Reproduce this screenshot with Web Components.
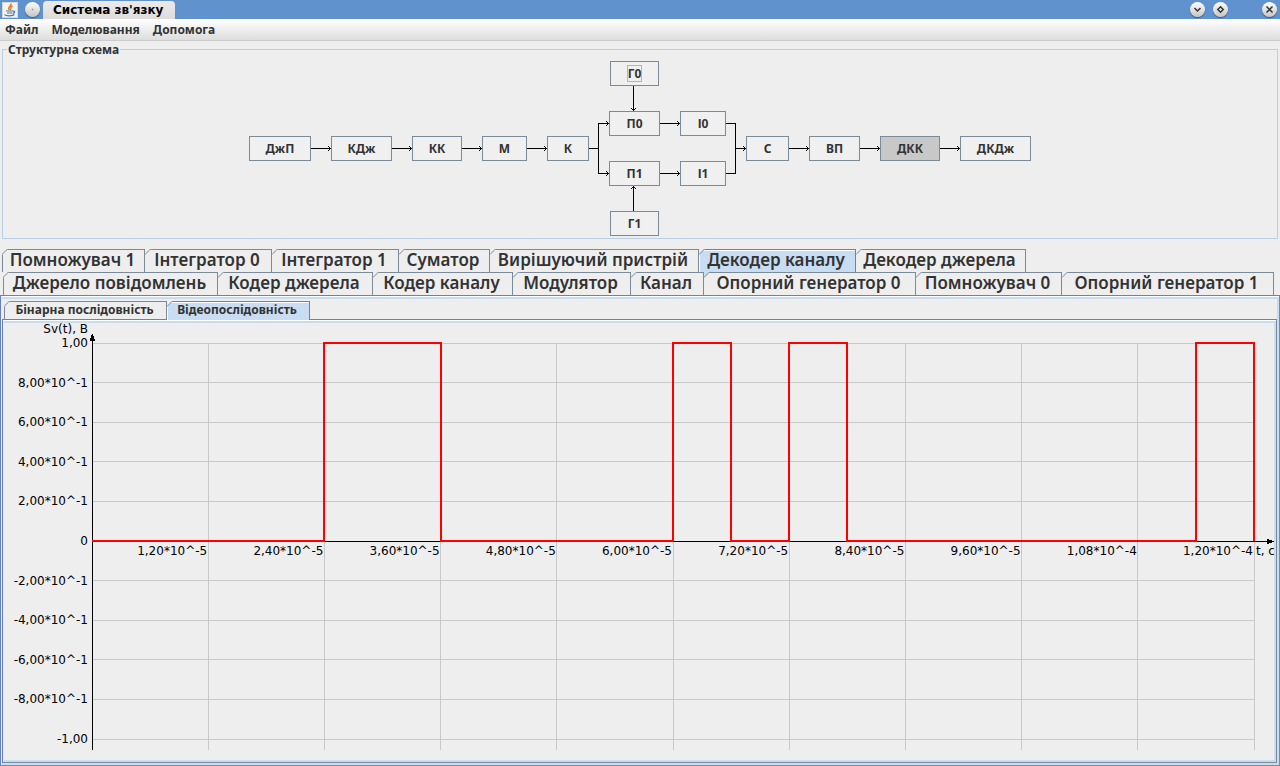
<!DOCTYPE html>
<html lang="uk">
<head>
<meta charset="utf-8">
<title>Система зв'язку</title>
<style>
  body { margin: 0; background: #eeeeee; }
</style>
</head>
<body>
<app-window></app-window>

<script>
const define = (name, html, setup) => {
  const template = document.createElement('template');
  template.innerHTML = html;
  customElements.define(name, class extends HTMLElement {
    connectedCallback() {
      if (this.shadowRoot) return;
      const root = this.attachShadow({ mode: 'open' });
      root.append(template.content.cloneNode(true));
      if (setup) setup(this, root);
    }
  });
};

/* Round window-manager button; the glyph attribute picks its drawing */
define('round-button', `
<style>
  :host { display: block; width: 15px; height: 15px; }
  button { display: block; width: 15px; height: 15px; padding: 0; border: 0; border-radius: 50%;
    background: linear-gradient(#ffffff, #c6c4c2); box-shadow: 0 1px 1px #33558a; }
  svg { display: block; }
</style>
<button type="button"><svg width="15" height="15" viewBox="0 0 15 15" fill="none" stroke="#333333" stroke-width="1.5" aria-hidden="true"><path/></svg></button>`,
(host, root) => {
  const glyphs = {
    shade: 'M4.5 6 L7.5 9 L10.5 6',
    restore: 'M7.5 4.8 L10.2 7.5 L7.5 10.2 L4.8 7.5 Z',
    close: 'M4.5 4.5 L10.5 10.5 M10.5 4.5 L4.5 10.5',
    dot: 'M6.8 7.5 H8.2'
  };
  const p = root.querySelector('path');
  p.setAttribute('d', glyphs[host.getAttribute('glyph')]);
  if (host.getAttribute('glyph') === 'dot') p.setAttribute('stroke', '#888888');
  root.querySelector('button').setAttribute('aria-label', host.getAttribute('label'));
});

define('title-bar', `
<style>
  :host { display: flex; align-items: center; height: 19px; padding: 0 3px 0 2px; background: #6093ce; }
  .java { display: block; width: 16px; height: 16px; margin-right: 7px; }
  h1 { align-self: flex-end; box-sizing: border-box; height: 18px; margin: 0 0 0 3px; padding: 0 12px 0 10px;
    border-radius: 4px 4px 0 0; background: linear-gradient(#eceaea, #dedcdb);
    font: bold 12px/19px "DejaVu Sans", sans-serif; color: #000000; white-space: nowrap; }
  .buttons { display: flex; gap: 8px; margin-left: auto; }
  .buttons :last-child { margin-left: 26px; }
</style>
<svg class="java" viewBox="0 0 16 16" aria-hidden="true">
  <rect x="0.5" y="0.5" width="15" height="15" fill="#f3f3f1" stroke="#d5d5d2"/>
  <path d="M9 1.5 C10 3.5 5.5 4.2 7 8 M10.5 3.8 C7.5 5.2 9.8 6.2 8.2 8" fill="none" stroke="#e8762c" stroke-width="1.5"/>
  <path d="M4 9 H11 M5 11 H10.5 M11 9.2 C13.5 8.6 13 11 11 11.4" fill="none" stroke="#4f7896" stroke-width="1.2"/>
  <path d="M2.5 12.6 C4 14.2 10.5 14.2 12.5 12.6" fill="none" stroke="#4f7896" stroke-width="1.3"/>
</svg>
<round-button glyph="dot" label="Меню вікна"></round-button>
<h1>Система зв'язку</h1>
<div class="buttons">
  <round-button glyph="shade" label="Згорнути"></round-button>
  <round-button glyph="restore" label="Відновити"></round-button>
  <round-button glyph="close" label="Закрити"></round-button>
</div>`);

define('menu-bar', `
<style>
  :host { display: block; border-bottom: 1px solid #cccccc; background: linear-gradient(#ffffff, #dddddd); }
  nav { display: flex; gap: 13px; height: 21px; padding: 0 5px; }
  button { padding: 0; border: 0; background: none; font: bold 12px/21px "Noto Sans", sans-serif; color: #333333; }
</style>
<nav aria-label="Головне меню">
  <button type="button">Файл</button>
  <button type="button">Моделювання</button>
  <button type="button">Допомога</button>
</nav>`);

/* One block of the structural scheme */
define('scheme-node', `
<style>
  :host { position: absolute; display: block; height: 25px; }
  button { display: flex; align-items: center; justify-content: center; width: 100%; height: 100%; padding: 0;
    border: 1px solid #7a8a99; background: #f0f0f0; font: bold 12px/15px "Noto Sans", sans-serif; color: #333333; }
  :host([active]) button { background: #c8c8c8; }
  :host([focused]) span { outline: 1px solid #a3b8cc; }
</style>
<button type="button"><span><slot></slot></span></button>`);

define('block-scheme', `
<style>
  :host { display: block; margin: 1px 2px 0; }
  fieldset { min-width: 0; margin: 0; padding: 4px 0 2px; border: 1px solid #b8cfe5; }
  legend { margin-left: 4px; padding: 0 1px; font: bold 12px/15px "Noto Sans", sans-serif; color: #333333; }
  .canvas { position: relative; width: 782px; height: 175px; margin: 0 auto; }
  svg { display: block; shape-rendering: crispEdges; }
</style>
<fieldset>
  <legend>Структурна схема</legend>
  <div class="canvas">
    <svg width="782" height="175" viewBox="0 0 782 175" fill="none" stroke="#000000" aria-hidden="true"></svg>
  </div>
</fieldset>`,
(host, root) => {
  const canvas = root.querySelector('.canvas');
  const nodes = [
    ['ДжП', 0, 75, 62], ['КДж', 82, 75, 61], ['КК', 163, 75, 50], ['М', 233, 75, 45], ['К', 298, 75, 42],
    ['Г0', 361, 0, 49, 'focused'], ['П0', 360, 50, 51], ['П1', 360, 100, 51], ['Г1', 361, 150, 49],
    ['І0', 431, 50, 46], ['І1', 431, 100, 46],
    ['С', 497, 75, 43], ['ВП', 560, 75, 51], ['ДКК', 631, 75, 60, 'active'], ['ДКДж', 711, 75, 71]
  ];
  for (const [name, x, y, w, flag] of nodes) {
    const n = document.createElement('scheme-node');
    n.textContent = name;
    n.style.cssText = `left:${x}px;top:${y}px;width:${w}px`;
    if (flag) n.setAttribute(flag, '');
    canvas.append(n);
  }
  const right = (x1, x2, y) => `M${x1} ${y}.5 H${x2} M${x2 - 3} ${y - 2} l2.5 2.5 l-2.5 2.5 `;
  const d = right(62, 82, 87) + right(143, 163, 87) + right(213, 233, 87) + right(278, 298, 87)
    + 'M340 87.5 H349.5 M349.5 62 V113 ' + right(349, 360, 62) + right(349, 360, 112)
    + right(411, 431, 62) + right(411, 431, 112)
    + 'M477 62.5 H486.5 V112.5 H477 ' + right(486, 497, 87)
    + right(540, 560, 87) + right(611, 631, 87) + right(691, 711, 87)
    + 'M384.5 25 V50 M382 47 l2.5 2.5 l2.5 -2.5 M384.5 150 V125 M382 128 l2.5 -2.5 l2.5 2.5';
  root.querySelector('svg').innerHTML = `<path d="${d}"/>`;
});

/* Tab with a bevelled left corner */
define('bevel-tab', `
<style>
  :host { display: block; position: relative; min-width: 0; --line: #7a8a99; }
  :host([selected]) { --line: #6382bf; }
  button { display: block; box-sizing: border-box; width: 100%; height: 100%; padding: 0 2px 2px 0; border: solid var(--line);
    border-width: 1px 1px 0 0; background: transparent; font: inherit; color: #333333; white-space: nowrap; overflow: hidden; }
  :host([first]) button { border-left-width: 1px; }
  :host([selected]) button { background: #c8ddf2; box-shadow: inset 1px 1px #ffffff; }
  svg { position: absolute; left: 0; top: 0; display: block; }
</style>
<button type="button" role="tab"><slot></slot></button>
<svg width="6" height="6" viewBox="0 0 6 6" aria-hidden="true"><path d="M0 0 H6 L0 6 Z" fill="var(--behind, #eeeeee)"/><path d="M0 5.5 L5.5 0" stroke="var(--line)" fill="none"/></svg>`,
(host, root) => root.querySelector('button').setAttribute('aria-selected', host.hasAttribute('selected')));

/* Plot of the signal against time */
define('signal-chart', `
<style>
  :host { display: grid; grid-template-columns: 88px minmax(0, 1fr) 20px; grid-template-rows: 20px minmax(0, 1fr) 20px;
    padding-bottom: 1px; font: 12px/14px "DejaVu Sans", sans-serif; color: #000000; overflow: hidden; }
  .unit { grid-area: 1 / 1; justify-self: end; margin-right: 4px; line-height: 12px; }
  .ys { grid-area: 2 / 1; position: relative; }
  .ys span { position: absolute; right: 4px; transform: translateY(-50%); white-space: nowrap; }
  .plot { grid-area: 2 / 2; position: relative; }
  .plot svg { position: absolute; left: 0; top: 0; width: 100%; height: 100%; overflow: visible; shape-rendering: crispEdges; }
  .plot .xs { position: absolute; inset: 50% 0 auto 0; display: grid; grid-template-columns: repeat(10, minmax(0, 1fr)); padding-top: 3px; }
  .xs span { justify-self: end; padding-right: 1px; white-space: nowrap; }
  .time { position: absolute; left: 100%; top: 50%; padding: 3px 0 0 2px; white-space: nowrap; }
  .axis { fill: none; stroke: #000000; }
</style>
<span class="unit">Sv(t), В</span>
<div class="ys"></div>
<div class="plot">
  <svg role="img" aria-label="Відеопослідовність">
    <g class="grid" stroke="#c8c8c8"></g>
    <svg overflow="visible">
      <line x1="0" x2="100%" y1="50%" y2="50%" class="axis"/>
      <line x1="0" x2="0" y1="-9" y2="100%" class="axis"/>
      <path d="M0 -10 L-2.5 -2 H3.5 Z" fill="#000000"/>
    </svg>
    <svg x="100%" y="50%" overflow="visible">
      <path d="M0 0 H20" class="axis"/><path d="M20 0.5 L13 -2.5 V3.5 Z" fill="#000000"/>
    </svg>
    <svg y="100%" overflow="visible"><path d="M0 0 V11" class="axis"/></svg>
    <svg viewBox="0 0 20 2" preserveAspectRatio="none" overflow="visible">
      <path d="M0 1 H4 V0 H6 V1 H10 V0 H11 V1 H12 V0 H13 V1 H19 V0 H20 V1" fill="none" stroke="#ff0000" stroke-width="2" vector-effect="non-scaling-stroke"/>
    </svg>
  </svg>
  <div class="xs"></div>
  <span class="time">t, с</span>
</div>`,
(host, root) => {
  const ys = ['1,00', '8,00*10^-1', '6,00*10^-1', '4,00*10^-1', '2,00*10^-1', '0',
    '-2,00*10^-1', '-4,00*10^-1', '-6,00*10^-1', '-8,00*10^-1', '-1,00'];
  const xs = ['1,20*10^-5', '2,40*10^-5', '3,60*10^-5', '4,80*10^-5', '6,00*10^-5', '7,20*10^-5',
    '8,40*10^-5', '9,60*10^-5', '1,08*10^-4', '1,20*10^-4'];
  root.querySelector('.ys').innerHTML = ys.map((t, i) => `<span style="top:${i * 10}%">${t}</span>`).join('');
  root.querySelector('.xs').innerHTML = xs.map(t => `<span>${t}</span>`).join('');
  root.querySelector('.grid').innerHTML =
    ys.map((t, i) => `<line x1="0" x2="100%" y1="${i * 10}%" y2="${i * 10}%"/>`).join('') +
    xs.map((t, i) => `<line x1="${(i + 1) * 10}%" x2="${(i + 1) * 10}%" y1="0" y2="100%"/>` +
      `<svg x="${(i + 1) * 10}%" y="100%" overflow="visible"><path d="M0 0 V11"/></svg>`).join('');
});

/* Framed area under a row of tabs */
define('tab-pane', `
<style>
  :host { display: flex; flex-direction: column; box-sizing: border-box; border: solid; border-width: 1px;
    border-color: #6382bf #7a8a99 #7a8a99 #6382bf; box-shadow: inset 0 1px #ffffff; padding: 1px 0 0 1px; }
  .inner { flex: 1; display: flex; flex-direction: column; min-height: 0; border: solid #c8ddf2; border-width: 2px 2px 2px 0; }
</style>
<div class="inner"><slot></slot></div>`);

define('app-window', `
<style>
  :host { display: flex; flex-direction: column; min-height: 100vh; background: #eeeeee; }
  .row { display: grid; height: 23px; font: 600 17px/20px "Noto Sans", sans-serif; }
  .back { grid-template-columns: 143fr 127fr 127fr 91fr 209fr 157fr 170fr 248fr; margin: 10px 6px 0 2px; }
  .front { grid-template-columns: 215fr 155fr 140fr 118fr 73fr 212fr 146fr 212fr; margin: 0 6px 0 3px; }
  .under-selected { --behind: #c8ddf2; }
  .outer { flex: 1; }
  .small { display: grid; grid-template-columns: 163px 143px; height: 18px; padding: 2px 0 0 2px;
    font: bold 12px/16px "Noto Sans", sans-serif; }
  .chart { flex: 1; }
  .chart signal-chart { flex: 1; }
</style>
<title-bar></title-bar>
<menu-bar></menu-bar>
<block-scheme></block-scheme>
<div class="row back" role="tablist">
  <bevel-tab first>Помножувач 1</bevel-tab>
  <bevel-tab>Інтегратор 0</bevel-tab>
  <bevel-tab>Інтегратор 1</bevel-tab>
  <bevel-tab>Суматор</bevel-tab>
  <bevel-tab>Вирішуючий пристрій</bevel-tab>
  <bevel-tab selected>Декодер каналу</bevel-tab>
  <bevel-tab>Декодер джерела</bevel-tab>
</div>
<div class="row front" role="tablist">
  <bevel-tab first>Джерело повідомлень</bevel-tab>
  <bevel-tab>Кодер джерела</bevel-tab>
  <bevel-tab>Кодер каналу</bevel-tab>
  <bevel-tab>Модулятор</bevel-tab>
  <bevel-tab>Канал</bevel-tab>
  <bevel-tab class="under-selected">Опорний генератор 0</bevel-tab>
  <bevel-tab>Помножувач 0</bevel-tab>
  <bevel-tab>Опорний генератор 1</bevel-tab>
</div>
<tab-pane class="outer">
  <div class="small" role="tablist">
    <bevel-tab first>Бінарна послідовність</bevel-tab>
    <bevel-tab selected>Відеопослідовність</bevel-tab>
  </div>
  <tab-pane class="chart"><signal-chart></signal-chart></tab-pane>
</tab-pane>`);
</script>
</body>
</html>
